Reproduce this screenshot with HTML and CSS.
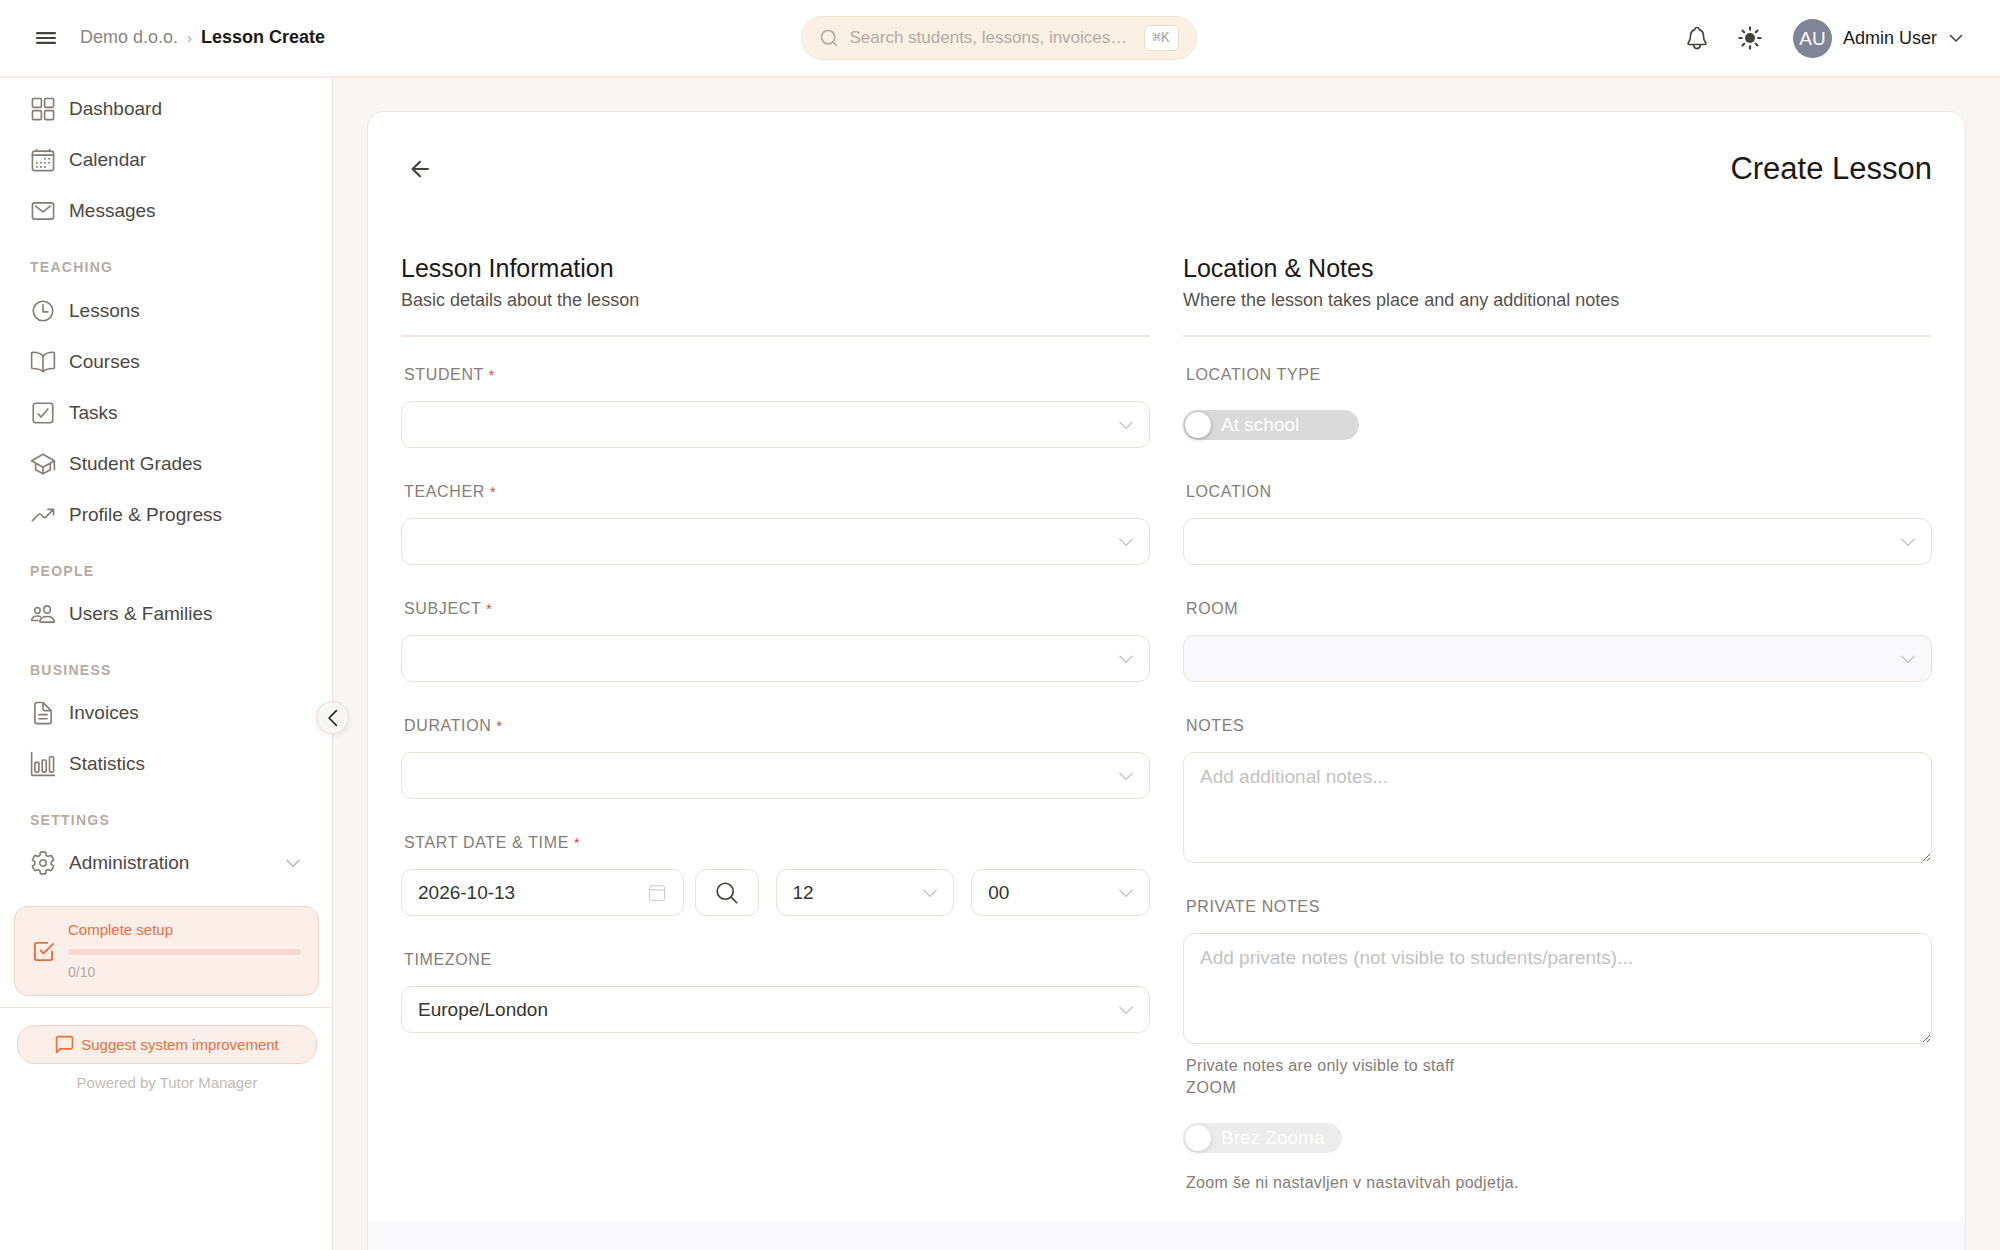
FILE: index.html
```html
<!DOCTYPE html>
<html lang="en">
<head>
<meta charset="utf-8">
<meta name="viewport" content="width=device-width, initial-scale=1">
<title>Lesson Create</title>
<link rel="stylesheet" href="styles.css">
</head>
<body>
<svg class="sprite" aria-hidden="true">
  <symbol id="i-chevron" viewBox="0 0 16 16"><path d="M2.500 5.500L8 11l5.500-5.500"/></symbol>
</svg>
<div class="app">
  <header class="topbar">
    <div class="topbar-start">
      <button class="icon-btn menu-btn" type="button" aria-label="Menu"><svg class="icon ink" viewBox="0 0 512 512"><path stroke-width="44" d="M80 160h352M80 256h352M80 352h352"/></svg></button>
      <nav class="crumbs" aria-label="Breadcrumb">
        <a href="#">Demo d.o.o.</a><span class="crumb-sep">›</span><span class="crumb-current">Lesson Create</span>
      </nav>
    </div>
    <label class="search">
      <svg class="search-icon" viewBox="0 0 24 24"><circle cx="11" cy="11" r="8"/><path d="M21 21l-4.300-4.300"/></svg>
      <input type="text" placeholder="Search students, lessons, invoices…" aria-label="Search">
      <kbd>⌘K</kbd>
    </label>
    <div class="topbar-end">
      <button class="icon-btn" type="button" aria-label="Notifications"><svg class="icon ink" viewBox="0 0 512 512"><path d="M427.68 351.43C402 320 383.87 304 383.87 217.35 383.87 138 343.35 109.73 310 96c-4.430-1.820-8.600-6-9.950-10.550C294.200 65.540 277.800 48 256 48s-38.210 17.550-44 37.470c-1.350 4.600-5.520 8.710-9.950 10.530-33.390 13.750-73.870 41.920-73.870 121.350C128.130 304 110 320 84.320 351.430 73.680 364.450 83 384 101.610 384h308.880c18.510 0 27.770-19.610 17.190-32.570zM320 384v16a64 64 0 01-128 0v-16"/></svg></button>
      <button class="icon-btn" type="button" aria-label="Theme"><svg class="icon sun" viewBox="0 0 24 24"><circle cx="12" cy="12" r="4.600"/><path d="M12 2.200v2.200M12 19.600v2.200M2.200 12h2.200M19.600 12h2.200M5.100 5.100l1.500 1.500M17.400 17.400l1.500 1.500M5.100 18.900l1.500-1.500M17.400 6.600l1.500-1.500"/></svg></button>
      <button class="user" type="button">
        <span class="avatar">AU</span>
        <span>Admin User</span>
        <svg class="user-chevron"><use href="#i-chevron"/></svg>
      </button>
    </div>
  </header>

  <div class="body">
    <aside class="sidebar">
      <nav class="nav">
        <a href="#"><svg class="icon" viewBox="0 0 512 512"><rect x="48" y="48" width="176" height="176" rx="20"/><rect x="288" y="48" width="176" height="176" rx="20"/><rect x="48" y="288" width="176" height="176" rx="20"/><rect x="288" y="288" width="176" height="176" rx="20"/></svg>Dashboard</a>
        <a href="#"><svg class="icon" viewBox="0 0 512 512"><rect x="48" y="80" width="416" height="384" rx="48"/><path d="M128 48v32M384 48v32M464 160H48"/><g class="dots"><circle cx="296" cy="232" r="20"/><circle cx="376" cy="232" r="20"/><circle cx="296" cy="312" r="20"/><circle cx="376" cy="312" r="20"/><circle cx="136" cy="312" r="20"/><circle cx="216" cy="312" r="20"/><circle cx="136" cy="392" r="20"/><circle cx="216" cy="392" r="20"/><circle cx="296" cy="392" r="20"/></g></svg>Calendar</a>
        <a href="#"><svg class="icon" viewBox="0 0 512 512"><rect x="48" y="96" width="416" height="320" rx="40"/><path d="M112 160l144 112 144-112"/></svg>Messages</a>
        <h2>TEACHING</h2>
        <a href="#"><svg class="icon" viewBox="0 0 512 512"><circle cx="256" cy="256" r="192"/><path d="M256 128v144h96"/></svg>Lessons</a>
        <a href="#"><svg class="icon" viewBox="0 0 512 512"><path d="M256 160c16-63.160 76.430-95.410 208-96a15.940 15.940 0 0116 16v288a16 16 0 01-16 16c-128 0-177.450 25.810-208 64-30.370-38-80-64-208-64-9.880 0-16-8.050-16-17.930V80a15.940 15.940 0 0116-16c131.570.590 192 32.840 208 96zM256 160v288"/></svg>Courses</a>
        <a href="#"><svg class="icon" viewBox="0 0 512 512"><path d="M352 176L217.600 336 160 272"/><rect x="64" y="64" width="384" height="384" rx="48"/></svg>Tasks</a>
        <a href="#"><svg class="icon" viewBox="0 0 512 512"><path d="M32 192L256 64l224 128-224 128L32 192zM112 240v128l144 80 144-80V240M480 368V192M256 320v128"/></svg>Student Grades</a>
        <a href="#"><svg class="icon" viewBox="0 0 512 512"><path d="M352 144h112v112M48 368l121.370-121.370a32 32 0 0145.260 0l50.740 50.740a32 32 0 0045.260 0L448 160"/></svg>Profile &amp; Progress</a>
        <h2>PEOPLE</h2>
        <a href="#"><svg class="icon" viewBox="0 0 512 512"><path d="M402 168c-2.930 40.670-33.100 72-66 72s-63.120-31.320-66-72c-3-42.310 26.370-72 66-72s69 30.460 66 72zM336 304c-65.170 0-127.840 32.370-143.540 95.410-2.080 8.340 3.150 16.590 11.720 16.590h263.650c8.570 0 13.770-8.250 11.720-16.590C463.850 335.360 401.180 304 336 304zM200 185.940c-2.340 32.480-26.720 58.060-53 58.060s-50.700-25.570-53-58.060C91.610 152.150 115.340 128 147 128s55.390 24.770 53 57.940zM206 306c-18.050-8.270-37.930-11.450-59-11.450-52 0-102.100 25.850-114.650 76.200-1.650 6.660 2.530 13.250 9.370 13.250H154"/></svg>Users &amp; Families</a>
        <h2>BUSINESS</h2>
        <a href="#"><svg class="icon" viewBox="0 0 512 512"><path d="M416 221.250V416a48 48 0 01-48 48H144a48 48 0 01-48-48V96a48 48 0 0148-48h98.750a32 32 0 0122.620 9.370l141.260 141.260a32 32 0 019.370 22.620zM256 56v120a32 32 0 0032 32h120M176 288h160M176 368h160"/></svg>Invoices</a>
        <a href="#"><svg class="icon" viewBox="0 0 512 512"><path d="M32 32v432a16 16 0 0016 16h432"/><rect x="96" y="224" width="80" height="192" rx="20"/><rect x="240" y="176" width="80" height="240" rx="20"/><rect x="384" y="112" width="80" height="304" rx="20"/></svg>Statistics</a>
        <h2>SETTINGS</h2>
        <a href="#"><svg class="icon" viewBox="0 0 512 512"><path d="M262.290 192.310a64 64 0 1057.400 57.400 64.130 64.130 0 00-57.400-57.400zM416.390 256a154.340 154.340 0 01-1.530 20.790l45.210 35.460a10.810 10.810 0 012.450 13.750l-42.770 74a10.810 10.810 0 01-13.140 4.590l-44.900-18.080a16.110 16.110 0 00-15.170 1.750A164.480 164.480 0 01325 400.800a15.940 15.940 0 00-8.820 12.140l-6.730 47.890a11.080 11.080 0 01-10.680 9.170h-85.540a11.110 11.110 0 01-10.690-8.870l-6.720-47.820a16.070 16.070 0 00-9-12.220 155.300 155.300 0 01-21.460-12.570 16 16 0 00-15.110-1.710l-44.890 18.070a10.810 10.810 0 01-13.140-4.580l-42.770-74a10.800 10.800 0 012.450-13.750l38.210-30a16.050 16.050 0 006-14.080c-.360-4.170-.580-8.330-.580-12.500s.210-8.270.580-12.350a16 16 0 00-6.070-13.940l-38.190-30A10.810 10.810 0 0149.480 186l42.770-74a10.810 10.810 0 0113.140-4.590l44.900 18.080a16.110 16.110 0 0015.170-1.750A164.480 164.480 0 01187 111.200a15.940 15.940 0 008.820-12.140l6.730-47.890A11.080 11.080 0 01213.230 42h85.540a11.110 11.110 0 0110.690 8.870l6.720 47.820a16.070 16.070 0 009 12.220 155.300 155.300 0 0121.460 12.570 16 16 0 0015.110 1.710l44.890-18.070a10.810 10.810 0 0113.140 4.580l42.770 74a10.800 10.800 0 01-2.450 13.750l-38.210 30a16.050 16.050 0 00-6.050 14.080c.330 4.140.550 8.300.550 12.470z"/></svg>Administration<svg class="nav-chevron"><use href="#i-chevron"/></svg></a>
      </nav>
      <a class="setup" href="#">
        <svg class="setup-icon" viewBox="0 0 24 24"><path d="M9 11l3 3L22 4M21 12v7a2 2 0 01-2 2H5a2 2 0 01-2-2V5a2 2 0 012-2h11"/></svg>
        <span class="setup-body">
          <span class="setup-title">Complete setup</span>
          <span class="setup-bar"></span>
          <span class="setup-count">0/10</span>
        </span>
      </a>
      <div class="sidebar-foot">
        <button class="suggest" type="button"><svg viewBox="0 0 24 24"><path d="M22 15.500a2 2 0 01-2 2H6.500L2 22V4a2 2 0 012-2h16a2 2 0 012 2z"/></svg>Suggest system improvement</button>
        <p class="powered">Powered by Tutor Manager</p>
      </div>
      <button class="collapse" type="button" aria-label="Collapse sidebar"><svg viewBox="0 0 16 16"><path d="M11 1.500L4.500 8l6.500 6.500"/></svg></button>
    </aside>

    <main class="main">
      <form class="card">
        <div class="card-head">
          <button class="icon-btn" type="button" aria-label="Back"><svg class="back" viewBox="0 0 24 24"><path d="M21.500 12H3M12 3.200L3 12l9 8.800"/></svg></button>
          <h1>Create Lesson</h1>
        </div>
        <div class="columns">
          <section class="column">
            <header class="section-head">
              <h2>Lesson Information</h2>
              <p>Basic details about the lesson</p>
            </header>
            <div class="field"><label for="student">STUDENT <i>*</i></label><div class="control"><select id="student"><option></option></select><svg class="caret"><use href="#i-chevron"/></svg></div></div>
            <div class="field"><label for="teacher">TEACHER <i>*</i></label><div class="control"><select id="teacher"><option></option></select><svg class="caret"><use href="#i-chevron"/></svg></div></div>
            <div class="field"><label for="subject">SUBJECT <i>*</i></label><div class="control"><select id="subject"><option></option></select><svg class="caret"><use href="#i-chevron"/></svg></div></div>
            <div class="field"><label for="duration">DURATION <i>*</i></label><div class="control"><select id="duration"><option></option></select><svg class="caret"><use href="#i-chevron"/></svg></div></div>
            <div class="field"><label for="date">START DATE &amp; TIME <i>*</i></label>
              <div class="datetime">
                <div class="date-group">
                  <div class="control"><input id="date" type="text" value="2026-10-13"><svg class="caret date-icon" viewBox="0 0 20 20"><rect x="1.500" y="2" width="17" height="16.500" rx="2.500"/><path d="M1.500 6.500h17"/></svg></div>
                  <button class="find" type="button" aria-label="Find a slot"><svg class="icon ink" viewBox="0 0 512 512"><path d="M221.090 64a157.090 157.090 0 10157.090 157.090A157.100 157.100 0 00221.090 64zM338.290 338.290L448 448"/></svg></button>
                </div>
                <div class="control"><select aria-label="Hour"><option>12</option></select><svg class="caret"><use href="#i-chevron"/></svg></div>
                <div class="control"><select aria-label="Minute"><option>00</option></select><svg class="caret"><use href="#i-chevron"/></svg></div>
              </div>
            </div>
            <div class="field"><label for="tz">TIMEZONE</label><div class="control"><select id="tz"><option>Europe/London</option></select><svg class="caret"><use href="#i-chevron"/></svg></div></div>
          </section>

          <section class="column">
            <header class="section-head">
              <h2>Location &amp; Notes</h2>
              <p>Where the lesson takes place and any additional notes</p>
            </header>
            <div class="field"><label for="loctype">LOCATION TYPE</label><div class="switch-row"><label class="switch wide"><input id="loctype" type="checkbox"><span>At school</span></label></div></div>
            <div class="field"><label for="location">LOCATION</label><div class="control"><select id="location"><option></option></select><svg class="caret"><use href="#i-chevron"/></svg></div></div>
            <div class="field"><label for="room">ROOM</label><div class="control"><select id="room" disabled><option></option></select><svg class="caret"><use href="#i-chevron"/></svg></div></div>
            <div class="field"><label for="notes">NOTES</label><textarea id="notes" placeholder="Add additional notes..."></textarea></div>
            <div class="field"><label for="private">PRIVATE NOTES</label><textarea id="private" placeholder="Add private notes (not visible to students/parents)..."></textarea><p class="hint">Private notes are only visible to staff</p></div>
            <div class="field follow"><label for="zoom">ZOOM</label><div class="switch-row"><label class="switch"><input id="zoom" type="checkbox" disabled><span>Brez Zooma</span></label></div><p class="hint">Zoom še ni nastavljen v nastavitvah podjetja.</p></div>
          </section>
        </div>
        <footer class="card-foot"></footer>
      </form>
    </main>
  </div>
</div>
</body>
</html>
```
FILE: styles.css
```css
* { box-sizing: border-box; margin: 0; padding: 0; }

body {
  font-family: "Liberation Sans", Arial, sans-serif;
  font-size: 18px;
  color: #1c1917;
  background: #f9f7f3;
}

button, input, select, textarea { font: inherit; color: inherit; }
button { background: none; border: 0; cursor: pointer; }
a { color: inherit; text-decoration: none; }
svg { fill: none; stroke: currentColor; stroke-linecap: round; stroke-linejoin: round; flex: none; }
.sprite { position: absolute; width: 0; height: 0; }

.icon { width: 26px; height: 26px; stroke-width: 32; color: #857d78; display: block; }
.icon.ink { color: #44403c; }
.icon .dots { fill: currentColor; stroke: none; }
.icon.sun { stroke-width: 2; color: #44403c; }
.icon.sun circle { fill: currentColor; stroke: none; }
.icon-btn { display: flex; align-items: center; justify-content: center; }

.app { height: 100vh; display: flex; flex-direction: column; }

/* top bar */
.topbar {
  flex: none;
  height: 78px;
  display: grid;
  grid-template-columns: 1fr auto 1fr;
  align-items: center;
  padding: 0 36px 0 33px;
  background: #fff;
  border-bottom: 2px solid #f5ebdf;
}
.topbar-start { display: flex; align-items: center; gap: 21px; }
.crumbs { display: flex; align-items: center; gap: 9px; height: 28px; padding-bottom: 1px; color: #8c857f; }
.crumb-sep { font-size: 15px; color: #a8a29e; }
.crumb-current { font-weight: 700; color: #1c1917; }

.search {
  width: 396px;
  height: 44px;
  display: flex;
  align-items: center;
  gap: 11px;
  padding: 0 17px;
  border: 1px solid #f3e4d2;
  border-radius: 22px;
  background: #fbf0e4;
  color: #b3aaa3;
}
.search-icon { width: 20px; height: 20px; stroke-width: 2; }
.search input { flex: 1; min-width: 0; height: 26px; padding-bottom: 1px; margin-right: -8px; border: 0; outline: 0; background: none; font-size: 17px; }
.search input::placeholder { color: #b3aaa3; }
.search kbd {
  height: 26px;
  padding: 0 8px;
  border: 1px solid #e9dcc4;
  border-radius: 6px;
  background: #fff;
  font: 14px/24px "Liberation Mono", monospace;
  color: #aaa29c;
}

.topbar-end { display: flex; align-items: center; justify-content: flex-end; gap: 27px; }
.user { display: flex; align-items: center; gap: 11px; margin-left: 3px; }
.avatar { width: 39px; height: 39px; border-radius: 50%; background: #7f8597; color: #fff; font-size: 19px; line-height: 39px; text-align: center; }
.user-chevron { width: 16px; height: 16px; stroke-width: 1.5; color: #44403c; }

/* sidebar */
.body { flex: 1; min-height: 0; display: flex; }
.sidebar { position: relative; flex: none; width: 333px; background: #fff; border-right: 1px solid #ebe2d6; }
.nav { padding: 5px 30px 0; }
.nav a { display: flex; align-items: center; gap: 13px; height: 51px; font-size: 19px; color: #4d4844; }
.nav h2 { height: 48px; padding-top: 13px; font-size: 14px; line-height: 36px; letter-spacing: 0.09em; color: #b5aca5; }
.nav h2:first-of-type { height: 49px; }
.nav-chevron { width: 18px; height: 18px; margin-left: auto; stroke-width: 1; color: #a8a29e; }

.setup {
  display: flex;
  align-items: center;
  gap: 13px;
  height: 90px;
  margin: 18px 13px 11px 14px;
  padding: 0 17px;
  border: 1px solid #f8cfc3;
  border-radius: 14px;
  background: #fceee9;
  color: #e8703f;
}
.setup-icon { width: 23px; height: 23px; stroke-width: 2; }
.setup-body { flex: 1; display: flex; flex-direction: column; font-size: 15px; line-height: 18px; }
.setup-bar { height: 6px; margin: 10px 0 8px; border-radius: 3px; background: #f9d9cf; }
.setup-count { font-size: 14px; color: #b3a8a2; }

.sidebar-foot { padding: 17px 15px 17px 17px; border-top: 1px solid #f3e4d2; }
.suggest {
  width: 100%;
  height: 39px;
  display: flex;
  align-items: center;
  justify-content: center;
  gap: 7px;
  border: 1px solid #f8cfc3;
  border-radius: 18px;
  background: #fceee9;
  color: #e8703f;
  font-size: 15px;
}
.suggest svg { width: 19px; height: 19px; stroke-width: 2; }
.powered { margin-top: 10px; font-size: 15px; line-height: 18px; text-align: center; color: #c0bbb7; }

.collapse {
  position: absolute;
  top: 623px;
  right: -17px;
  width: 33px;
  height: 33px;
  display: grid;
  place-items: center;
  border: 1px solid #ebe2d6;
  border-radius: 50%;
  background: #f9f7f3;
  box-shadow: 0 2px 6px rgba(0, 0, 0, 0.08);
  color: #292524;
}
.collapse svg { width: 18px; height: 18px; stroke-width: 1.5; }

/* form card */
.main { flex: 1; min-width: 0; overflow-y: auto; scrollbar-width: none; padding: 33px 34px; }
.card { background: #fff; border: 1px solid #f3e6d8; border-radius: 16px; overflow: hidden; }
.card-head { display: flex; align-items: center; justify-content: space-between; height: 114px; padding: 0 33px; }
.card-head .icon-btn { width: 38px; height: 38px; color: #44403c; }
.back { width: 20px; height: 20px; stroke-width: 2.5; }
.card-head h1 { font-size: 31px; font-weight: 400; }
.columns { display: grid; grid-template-columns: 1fr 1fr; gap: 33px; padding: 27px 33px 29px; }
.column { display: flex; flex-direction: column; gap: 34px; min-width: 0; }
.section-head { padding-bottom: 23px; margin-bottom: -6px; border-bottom: 2px solid #f3e6d8; }
.section-head h2 { font-size: 25px; line-height: 30px; font-weight: 400; }
.section-head p { margin-top: 5px; line-height: 24px; color: #57524e; }

.field > label { display: block; margin-bottom: 16px; padding-left: 3px; font-size: 16px; line-height: 20px; letter-spacing: 0.04em; color: #857d78; }
.field i { font-style: normal; font-size: 14px; color: #dc4438; }
.field.follow { margin-top: -33px; }
.control { position: relative; min-width: 0; }
.control select, .control input, textarea {
  display: block;
  width: 100%;
  height: 47px;
  padding: 0 16px;
  border: 1px solid #e9e2d9;
  border-radius: 11px;
  outline: 0;
  background: #fff;
  font-size: 19px;
  color: #383431;
  appearance: none;
}
.control select:disabled { background: #f9f9fc; opacity: 1; }
textarea { height: 111px; padding: 10px 16px; line-height: 28px; resize: vertical; }
textarea::placeholder { color: #c2c2c2; }
.caret { position: absolute; right: 15px; top: 15px; width: 18px; height: 18px; stroke-width: 1; color: #b9b9b9; pointer-events: none; }
.date-icon { right: 17px; width: 20px; height: 18px; color: #c2c2c2; }
.datetime { display: grid; grid-template-columns: 2fr 1fr 1fr; gap: 17px; }
.date-group { display: grid; grid-template-columns: 1fr 64px; gap: 11px; }
.find { display: grid; place-items: center; border: 1px solid #e9e2d9; border-radius: 11px; }

.switch-row { height: 47px; display: flex; align-items: center; }
.switch { display: flex; align-items: center; gap: 10px; height: 30px; padding: 0 18px 0 2px; border-radius: 15px; background: #dadada; color: #fff; font-size: 19px; line-height: 30px; }
.switch.wide { width: 176px; }
.switch input { appearance: none; width: 26px; height: 26px; border-radius: 50%; background: #fff; box-shadow: 0 1px 4px rgba(0, 0, 0, 0.3); }
.switch:has(input:disabled) { opacity: 0.5; }
.hint { margin-top: 11px; padding-left: 3px; font-size: 16px; line-height: 22px; letter-spacing: 0.02em; color: #857d78; }
.card-foot { height: 96px; background: #f9f9fc; }
```
